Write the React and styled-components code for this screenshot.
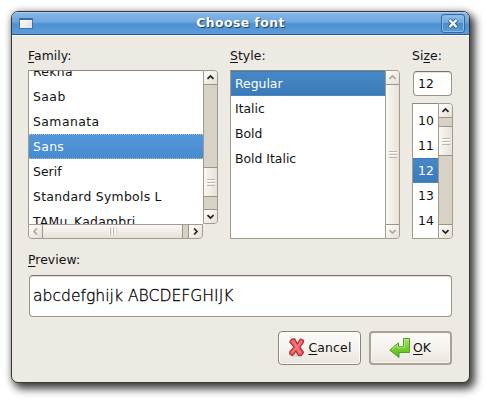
import React from "react";
import styled, { createGlobalStyle } from "styled-components";

const GlobalStyle = createGlobalStyle`
  * { box-sizing: border-box; }
  body {
    margin: 0;
    background: #fff;
    font: 12.4px/15px "DejaVu Sans", sans-serif;
    color: #111;
    overflow: hidden;
  }
`;

const Desktop = styled.main`
  width: 489px;
  height: 402px;
  padding: 11px;
  overflow: hidden;
`;

const Dialog = styled.section`
  width: 459px;
  height: 372px;
  display: flex;
  flex-direction: column;
  background: #edeae4;
  border: 1px solid #393735;
  border-radius: 7px;
  overflow: hidden;
  box-shadow: 4px 5px 8px 1px rgba(0, 0, 0, 0.72), 0 0 7px rgba(0, 0, 0, 0.26);
`;

const TitleBar = styled.header`
  flex: 0 0 23px;
  margin: 0;
  display: grid;
  grid-template-columns: 30px 1fr 30px;
  align-items: center;
  background: linear-gradient(#9bc5ee 0, #83b5e7 2px, #6ea7dd 10px, #4e90d0 12px, #5c9cdb 21px);
  border-bottom: 1px solid #2e5b89;
  box-shadow: inset 0 1px #a8cff1, 0 1px #fff;
`;

const WindowMark = styled.span`
  width: 14px;
  height: 11px;
  margin: 0 0 0 7px;
  border: 1px solid #3c76ad;
  border-top: 2px solid #426b95;
  background: linear-gradient(135deg, #fff, #dfdfdf);
`;

const Title = styled.h1`
  margin: 0;
  text-align: center;
  font-size: 12.4px;
  line-height: 20px;
  letter-spacing: 0.45px;
  color: #fff;
  text-shadow: 1px 1px 1px #183e67;
`;

const CloseButton = styled.button`
  width: 24px;
  height: 19px;
  margin: 0 0 0 2px;
  padding: 0;
  display: grid;
  place-items: center;
  border: 1px solid #32689e;
  border-radius: 3px;
  background: linear-gradient(#94c0ec, #6da6dd 46%, #4b8bca 50%, #5b9bda);
  box-shadow: inset 0 0 0 1px #8bbae6;
`;

const Content = styled.div`
  padding: 13px 16px 0 16px;
`;

const Choosers = styled.div`
  display: grid;
  grid-template-columns: 190px 170px 41px;
  column-gap: 12px;
`;

const Label = styled.div`
  height: 22px;
  white-space: nowrap;
  letter-spacing: 0.05px;
  u { text-underline-offset: 2px; text-decoration-thickness: 1px; text-decoration-skip-ink: none; }
`;

const ListGrid = styled.div`
  display: grid;
  grid-template-columns: 1fr 15px;
  grid-template-rows: ${(p) => p.$rows};
`;

const List = styled.div`
  display: flex;
  flex-direction: column;
  min-height: 0;
  overflow: hidden;
  background: #fff;
  border: 1px solid #a39c8e;
  border-top-color: #8d887d;
  border-right: 0;
  border-bottom-width: ${(p) => (p.$joined ? 0 : "1px")};
`;

const Option = styled.div`
  flex: 0 0 25px;
  padding: ${(p) => (p.$numeric ? "5px 0 0 5px" : "5px 0 0 4px")};
  margin-top: ${(p) => p.$offset || 0}px;
  white-space: nowrap;
  letter-spacing: ${(p) => p.$spacing || 0}px;
  color: ${(p) => (p.$tone ? "#fff" : "#111")};
  background: ${(p) =>
    p.$tone === "focus" ? "linear-gradient(#5596d9, #468bd0)" : p.$tone ? "linear-gradient(#4688c8, #3c7ab7)" : "transparent"};
  border-block: ${(p) => (p.$tone === "focus" ? "1px dotted #a8bdd0" : "1px solid transparent")};
  line-height: 13px;
`;

const Scrollbar = styled.div`
  display: flex;
  flex-direction: ${(p) => (p.$horizontal ? "row" : "column")};
  min-width: 0;
  min-height: 0;
  overflow: hidden;
  background: #d8d1c6;
  border: 1px solid #a39c8e;
  border-radius: ${(p) => (p.$horizontal ? "0 0 4px 4px" : "0 4px 4px 0")};
`;

const Arrow = styled.button`
  flex: 0 0 14px;
  padding: 0;
  display: grid;
  place-items: center;
  color: ${(p) => (p.$muted ? "#aaa79f" : "#222")};
  background: linear-gradient(135deg, #fff, #e4dfd7);
  border: 0 solid #9c9486;
  border-width: ${(p) => ({ up: "0 0 1px", down: "1px 0 0", left: "0 1px 0 0", right: "0 0 0 1px" })[p.$side]};
  svg { transform: rotate(${(p) => ({ up: 0, right: 90, down: 180, left: 270 })[p.$side]}deg); }
`;

const Track = styled.div`
  flex: ${(p) => (p.$grow ? "1" : `0 0 ${p.$size}px`)};
`;

const Thumb = styled.div`
  flex: ${(p) => (p.$size ? `0 0 ${p.$size}px` : "1")};
  display: grid;
  place-items: center;
  border: 0 solid #9c9486;
  border-width: ${(p) => (p.$full ? "0" : p.$horizontal ? "0 1px 0 0" : "1px 0")};
  background: linear-gradient(${(p) => (p.$horizontal ? "180deg" : "90deg")}, #faf8f5, #e7e1d9);
`;

const Grip = styled.span`
  width: 8px;
  height: 7px;
  background: repeating-linear-gradient(#bdb6aa 0 1px, #fff 1px 2px, transparent 2px 3px);
  transform: ${(p) => (p.$horizontal ? "rotate(90deg)" : "none")};
`;

const Entry = styled.div`
  display: flex;
  align-items: center;
  background: #fff;
  border: 1px solid #9a9489;
  border-top-color: #797268;
  border-radius: 4px;
  box-shadow: inset 0 1px #e4e2dd;
`;

const SizeEntry = styled(Entry)`
  width: 39px;
  height: 25px;
  margin: 1px 0 7px 1px;
  padding: 0 0 0 4px;
`;

const Preview = styled(Entry)`
  width: 423px;
  height: 42px;
  margin-left: 1px;
  padding: 0 0 0 3px;
  font-size: 15.6px;
  font-weight: 200;
  color: #000;
  -webkit-text-stroke: 0.3px #000;
  white-space: pre;
`;

const PreviewGroup = styled.div`
  margin-top: 13px;
  ${Label} { height: 23px; }
`;

const Actions = styled.footer`
  display: flex;
  gap: 8px;
  margin: 14px 0 0 250px;
`;

const ActionButton = styled.button`
  width: 83px;
  height: 34px;
  padding: ${(p) => (p.$primary ? "0 1px 1px 0" : "0 0 1px 1px")};
  display: flex;
  align-items: center;
  justify-content: center;
  gap: 2px;
  font: inherit;
  letter-spacing: ${(p) => (p.$primary ? "0" : "0.2px")};
  color: #111;
  white-space: nowrap;
  background: linear-gradient(#fbfaf8, #f5f2ed 55%, #eae5de);
  border: ${(p) => (p.$primary ? "2px solid #aaa294" : "1px solid #8c8477")};
  border-radius: 4px;
  box-shadow: ${(p) => (p.$primary ? "inset 0 0 0 1px #f8f6f2" : "inset 0 0 0 1px #fff")};
  u { text-underline-offset: 2px; text-decoration-thickness: 1px; }
  span { margin-top: -1px; }
  svg { flex: none; }
`;

function Chevron({ side, muted }) {
  return (
    <Arrow $side={side} $muted={muted} aria-label={side}>
      <svg width="9" height="7" viewBox="0 0 9 7" fill="none" stroke="currentColor" strokeWidth="1.7">
        <path d="M1.5 4.9 4.5 2l3 2.9" />
      </svg>
    </Arrow>
  );
}

function VerticalBar({ before, thumb, muted }) {
  return (
    <Scrollbar>
      <Chevron side="up" muted={muted} />
      {before ? <Track $size={before} /> : null}
      <Thumb $size={thumb} $full={!thumb}><Grip /></Thumb>
      {thumb ? <Track $grow /> : null}
      <Chevron side="down" muted={muted} />
    </Scrollbar>
  );
}

const families = [
  { name: "Rekha", spacing: 0.3 },
  { name: "Saab", spacing: 0.45 },
  { name: "Samanata", spacing: 0.45 },
  { name: "Sans", spacing: 0.35 },
  { name: "Serif", spacing: 0.05 },
  { name: "Standard Symbols L", spacing: 0.28 },
  { name: "TAMu_Kadambri", spacing: 0.25 },
];
const styles = ["Regular", "Italic", "Bold", "Bold Italic"];
const sizes = [10, 11, 12, 13, 14];

export default function App() {
  return (
    <>
      <GlobalStyle />
      <Desktop>
        <Dialog>
          <TitleBar>
            <WindowMark />
            <Title>Choose font</Title>
            <CloseButton aria-label="Close">
              <svg width="12" height="11" viewBox="0 0 12 11" fill="none">
                <path d="m2.2 1.7 7.6 7.6m0-7.6L2.2 9.3" stroke="#24598e" strokeWidth="4" />
                <path d="m2.4 1.9 7.2 7.2m0-7.2L2.4 9.1" stroke="#fff" strokeWidth="2.2" />
              </svg>
            </CloseButton>
          </TitleBar>
          <Content>
            <Choosers>
              <div>
                <Label><u>F</u>amily:</Label>
                <ListGrid $rows="154px 15px">
                  <List $joined>
                    {families.map(({ name, spacing }, i) => (
                      <Option key={name} $spacing={spacing} $offset={i === 0 ? -12 : 0} $tone={name === "Sans" ? "focus" : undefined}>{name}</Option>
                    ))}
                  </List>
                  <VerticalBar before={82} thumb={30} />
                  <Scrollbar $horizontal>
                    <Chevron side="left" muted />
                    <Thumb $horizontal $size={140}><Grip $horizontal /></Thumb>
                    <Track $grow />
                    <Chevron side="right" />
                  </Scrollbar>
                </ListGrid>
              </div>
              <div>
                <Label><u>S</u>tyle:</Label>
                <ListGrid $rows="169px">
                  <List>
                    {styles.map((name, i) => <Option key={name} $tone={i === 0 ? "active" : undefined}>{name}</Option>)}
                  </List>
                  <VerticalBar muted />
                </ListGrid>
              </div>
              <div>
                <Label>Si<u>z</u>e:</Label>
                <SizeEntry>12</SizeEntry>
                <ListGrid $rows="136px">
                  <List>
                    {sizes.map((size, i) => (
                      <Option key={size} $numeric $offset={i === 0 ? 4 : 0} $tone={size === 12 ? "active" : undefined}>{size}</Option>
                    ))}
                  </List>
                  <VerticalBar before={8} thumb={30} />
                </ListGrid>
              </div>
            </Choosers>
            <PreviewGroup>
              <Label><u>P</u>review:</Label>
              <Preview>abcdefghijk ABCDEFGHIJK</Preview>
            </PreviewGroup>
            <Actions>
              <ActionButton>
                <svg width="18" height="20" viewBox="0 0 18 20">
                  <ellipse cx="8" cy="17" rx="7" ry="2" fill="#d8d5cf" />
                  <path d="M3.6 1.2 6.6.8 9.3 5.9 12.4 1l3.1 1.4-.2 2.1-3.5 5 3.7 5-2.6 3-2.5-.2-2.5-4.3-3.4 4.4-2.8-1.8.3-2.2 4.2-4.5L1.8 4z" fill="#f4676a" stroke="#b72f39" strokeWidth="1.3" strokeLinejoin="round" />
                  <path d="m5 3.5 3.8 5.9 3.8-5.5M4.5 14.6l4.3-5.2 3.6 5.6" fill="none" stroke="#fa8584" strokeWidth="1" />
                </svg>
                <span><u>C</u>ancel</span>
              </ActionButton>
              <ActionButton $primary>
                <svg width="22" height="22" viewBox="0 0 22 22">
                  <defs>
                    <linearGradient id="leaf" x2="0" y2="1"><stop stopColor="#a8e36e" /><stop offset=".5" stopColor="#79cd32" /><stop offset="1" stopColor="#52b71a" /></linearGradient>
                  </defs>
                  <path d="M14.5 1.5h6V15.5H10v5L.8 13.2 9.5 5.8v4h5z" fill="url(#leaf)" stroke="#4ba022" strokeWidth="1" strokeLinejoin="round" />
                  <path d="M15.5 2.5h4M15.5 2.5v8.3h-7V8L2.6 13" fill="none" stroke="#b9ec8a" strokeWidth=".8" />
                </svg>
                <span><u>O</u>K</span>
              </ActionButton>
            </Actions>
          </Content>
        </Dialog>
      </Desktop>
    </>
  );
}
